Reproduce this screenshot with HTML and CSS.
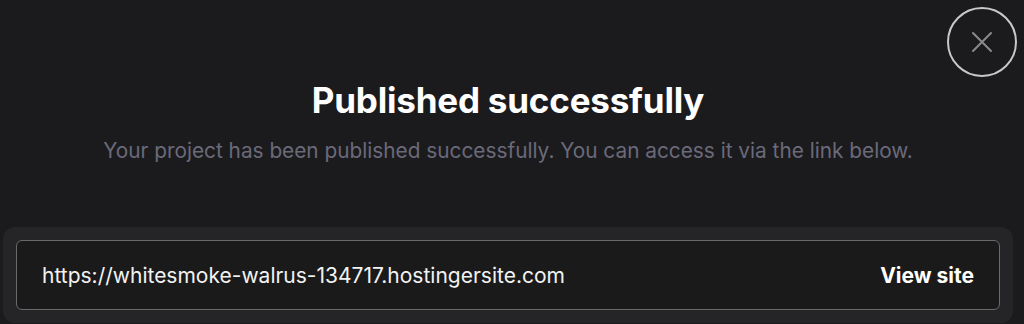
FILE: index.html
```html
<!DOCTYPE html>
<html lang="en">
<head>
<meta charset="utf-8">
<link rel="stylesheet" href="styles.css">
</head>
<body>
<div class="modal">
  <button class="close" aria-label="Close">
    <svg width="24" height="24" viewBox="0 0 24 24" fill="none" stroke="#8a8a8e" stroke-width="2" stroke-linecap="round"><path d="M3 3L21 21M21 3L3 21"/></svg>
  </button>
  <div class="header">
    <h1 class="title">Published successfully</h1>
    <p class="subtitle">Your project has been published successfully. You can access it via the link below.</p>
  </div>
  <div class="link-card">
    <div class="link-field">
      <span class="url">https://whitesmoke-walrus-134717.hostingersite.com</span>
      <a class="view" href="#">View site</a>
    </div>
  </div>
</div>
</body>
</html>
```
FILE: styles.css
```css
html, body {
  margin: 0;
  padding: 0;
  background: #1b1b1d;
  height: 100%;
  overflow: hidden;
}
body {
  font-family: Inter, "Noto Sans", sans-serif;
  color: #fff;
}
.modal {
  position: relative;
  padding: 0 11px 0 3px;
}
.close {
  position: absolute;
  top: 7px;
  left: 947px;
  width: 70px;
  height: 70px;
  border-radius: 50%;
  border: 2px solid #c8c8ca;
  background: transparent;
  display: flex;
  align-items: center;
  justify-content: center;
  padding: 0;
}
.header {
  padding-top: 78px;
  text-align: center;
}
.title {
  margin: 0;
  font-size: 35px;
  font-weight: 700;
  line-height: 44px;
  letter-spacing: -0.2px;
}
.subtitle {
  margin: 15px 0 0;
  font-size: 20.8px;
  line-height: 28px;
  color: #6a6a7a;
}
.link-card {
  margin-top: 62px;
  background: #252527;
  border-radius: 12px;
  padding: 13px;
}
.link-field {
  display: flex;
  align-items: center;
  justify-content: space-between;
  height: 68px;
  border: 1px solid #6a6a6c;
  border-radius: 6px;
  background: #1a1a1b;
  padding: 0 25px 0 25px;
}
.url {
  font-size: 21px;
  color: #f2f2f2;
}
.view {
  font-size: 21px;
  font-weight: 700;
  color: #fff;
  text-decoration: none;
}
```
